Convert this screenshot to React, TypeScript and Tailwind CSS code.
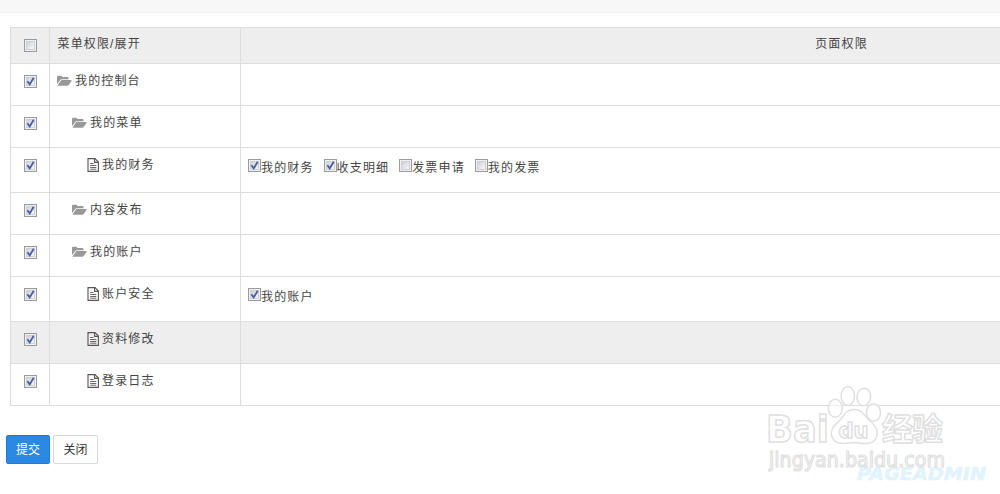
import React, { useState } from "react";
import clsx from "clsx";

interface Permission {
  label: string;
  checked: boolean;
}

interface MenuRow {
  id: number;
  name: string;
  level: number;
  active?: boolean;
  permissions?: Permission[];
}

const rows: MenuRow[] = [
  { id: 1, name: "我的控制台", level: 0 },
  { id: 2, name: "我的菜单", level: 1 },
  {
    id: 3,
    name: "我的财务",
    level: 2,
    permissions: [
      { label: "我的财务", checked: true },
      { label: "收支明细", checked: true },
      { label: "发票申请", checked: false },
      { label: "我的发票", checked: false },
    ],
  },
  { id: 4, name: "内容发布", level: 1 },
  { id: 5, name: "我的账户", level: 1 },
  {
    id: 6,
    name: "账户安全",
    level: 2,
    permissions: [{ label: "我的账户", checked: true }],
  },
  { id: 7, name: "资料修改", level: 2, active: true },
  { id: 8, name: "登录日志", level: 2 },
];

const indent = ["pl-[7px]", "pl-[22px]", "pl-[37px]"];

const CheckBox: React.FC<{ initial: boolean }> = ({ initial }) => {
  const [checked, setChecked] = useState(initial);

  return (
    <button
      type="button"
      role="checkbox"
      aria-checked={checked}
      onClick={() => setChecked(!checked)}
      className="block size-[13px] shrink-0 border border-[#9a9b9c] bg-[#f0f0f0] p-px"
    >
      <span className="block size-[9px] border border-[#cdd0d4] bg-linear-to-br from-[#cdd1d9] to-[#f8f8f8]">
        {checked && (
          <svg viewBox="0 0 9 9" className="-m-px block size-[9px]">
            <path d="M1.4 4.2 3.7 7.4 7.7.8" fill="none" stroke="#465ea6" strokeWidth="1.8" />
          </svg>
        )}
      </span>
    </button>
  );
};

const FolderIcon = () => (
  <svg viewBox="0 0 15 12" className="h-3 w-[15px] shrink-0" fill="#999">
    <path d="M0 9.3V1.7Q0 .7 1 .7H4.2Q5 .7 5.2 1.5V2H10.4Q11.5 2 11.5 3V4.2H5Q3.8 4.2 3 5.2Z" />
    <path d="M.5 10.6 3.6 6Q4.1 5.1 5 5.1H14.1Q15 5.2 14.5 6L11.9 9.8Q11.3 10.8 10.2 10.8H.9Q.3 10.8.5 10.6Z" />
  </svg>
);

const FileIcon = () => (
  <svg viewBox="0 0 12 14" className="h-3.5 w-3 shrink-0" fill="none" stroke="#5a5458" strokeWidth="1.1">
    <path d="M1 .6H8L11.4 4V13.4H1Z" />
    <path d="M7.6.6V4.4H11.4" />
    <path d="M3.2 5.5H6.5M3.2 7.5H9.3M3.2 9.5H9.3M3.2 11.2H9.3" strokeWidth=".9" />
  </svg>
);

const Watermark = () => (
  <svg
    viewBox="0 0 250 124"
    className="pointer-events-none absolute top-[370px] left-[750px] h-[124px] w-[250px]"
  >
    <text
      x="107"
      y="109.5"
      fontSize="18"
      fontWeight="bold"
      fontStyle="italic"
      textLength="129"
      lengthAdjust="spacingAndGlyphs"
      fill="#e1f3ff"
      stroke="#e1f3ff"
      strokeWidth=".6"
      fontFamily="'DejaVu Sans', sans-serif"
    >
      PAGEADMIN
    </text>
    <g fill="#fff" fillOpacity=".6" stroke="#e0e0e0" strokeWidth="1.5">
      <ellipse cx="85.3" cy="38.3" rx="7" ry="9" />
      <ellipse cx="97.8" cy="26" rx="6.7" ry="9.5" />
      <ellipse cx="113.8" cy="27" rx="6.8" ry="8.8" transform="rotate(8 113.8 27)" />
      <ellipse cx="123.5" cy="42.5" rx="7" ry="8.8" />
      <path d="M104 39.5C112 39.5 114 45 119 50C124 54 127.3 58 127.3 63C126.5 72 120 74 114 73.4L104 72.6L94 73.4C87 74 81.5 70 81.3 63C81.3 57 86 54 90 50C94.5 45 96 39.5 104 39.5Z" />
      <text x="16" y="72" fontSize="38" fontWeight="bold" textLength="63" lengthAdjust="spacingAndGlyphs" fontFamily="'DejaVu Sans', sans-serif">
        Bai
      </text>
      <text x="88.5" y="67.5" fontSize="22" fontWeight="bold" textLength="30" lengthAdjust="spacingAndGlyphs" fontFamily="'DejaVu Sans', sans-serif">
        du
      </text>
      <text x="132" y="69.5" fontSize="31" fontWeight="bold" textLength="61" fontFamily="'Noto Sans CJK SC', sans-serif">
        经验
      </text>
      <text x="19" y="96.5" fontSize="20.5" textLength="176" lengthAdjust="spacingAndGlyphs" strokeWidth="1.2" fontFamily="'DejaVu Sans', sans-serif">
        jingyan.baidu.com
      </text>
    </g>
  </svg>
);

const cell = "border-r border-b border-[#ddd] p-0 align-top";

const App: React.FC = () => {
  return (
    <div className="relative h-[494px] w-full overflow-hidden bg-white font-['Liberation_Sans','Noto_Sans_CJK_SC',sans-serif] text-xs text-[#444]">
      <div className="h-[13px] border-b border-[#eee] bg-[#f7f7f7]" />

      <table className="mt-3.5 ml-2.5 w-[1433px] table-fixed border-separate border-spacing-0 border-t border-l border-[#ddd] tracking-[1.15px]">
        <colgroup>
          <col className="w-[39px]" />
          <col className="w-[191px]" />
          <col />
        </colgroup>
        <thead>
          <tr className="h-9 bg-[#eee]">
            <th className={cell}>
              <div className="flex justify-center pt-[11px]">
                <CheckBox initial={false} />
              </div>
            </th>
            <th className={clsx(cell, "text-left font-normal")}>
              <div className="pt-[7px] pl-[7.5px] leading-[18px]">菜单权限/展开</div>
            </th>
            <th className={clsx(cell, "font-normal")}>
              <div className="pt-[7px] leading-[18px]">页面权限</div>
            </th>
          </tr>
        </thead>
        <tbody>
          {rows.map((row) => (
            <tr
              key={row.id}
              className={clsx(
                row.permissions ? "h-[45px]" : "h-[42px]",
                row.active && "bg-[#eee]"
              )}
            >
              <td className={cell}>
                <div className="flex justify-center pt-[11px]">
                  <CheckBox initial={true} />
                </div>
              </td>
              <td className={cell}>
                <div className={clsx("flex items-center gap-[3px] pt-2 leading-[18px]", indent[row.level])}>
                  {row.level === 2 ? <FileIcon /> : <FolderIcon />}
                  {row.name}
                </div>
              </td>
              <td className={cell}>
                {row.permissions && (
                  <div className="flex gap-2.5 pt-[11px] pl-[7px]">
                    {row.permissions.map((p) => (
                      <label key={p.label} className="flex">
                        <CheckBox initial={p.checked} />
                        <span className="leading-[18px]">{p.label}</span>
                      </label>
                    ))}
                  </div>
                )}
              </td>
            </tr>
          ))}
        </tbody>
      </table>

      <div className="mt-[29px] ml-1.5 flex gap-[3px]">
        <button className="h-[29px] w-11 rounded-xs border border-[#1c7cdc] bg-[#2b88e3] text-white">
          提交
        </button>
        <button className="h-[29px] w-[45px] rounded-xs border border-[#d8d8d8] bg-white text-[#333]">
          关闭
        </button>
      </div>

      <Watermark />
    </div>
  );
};

export default App;
